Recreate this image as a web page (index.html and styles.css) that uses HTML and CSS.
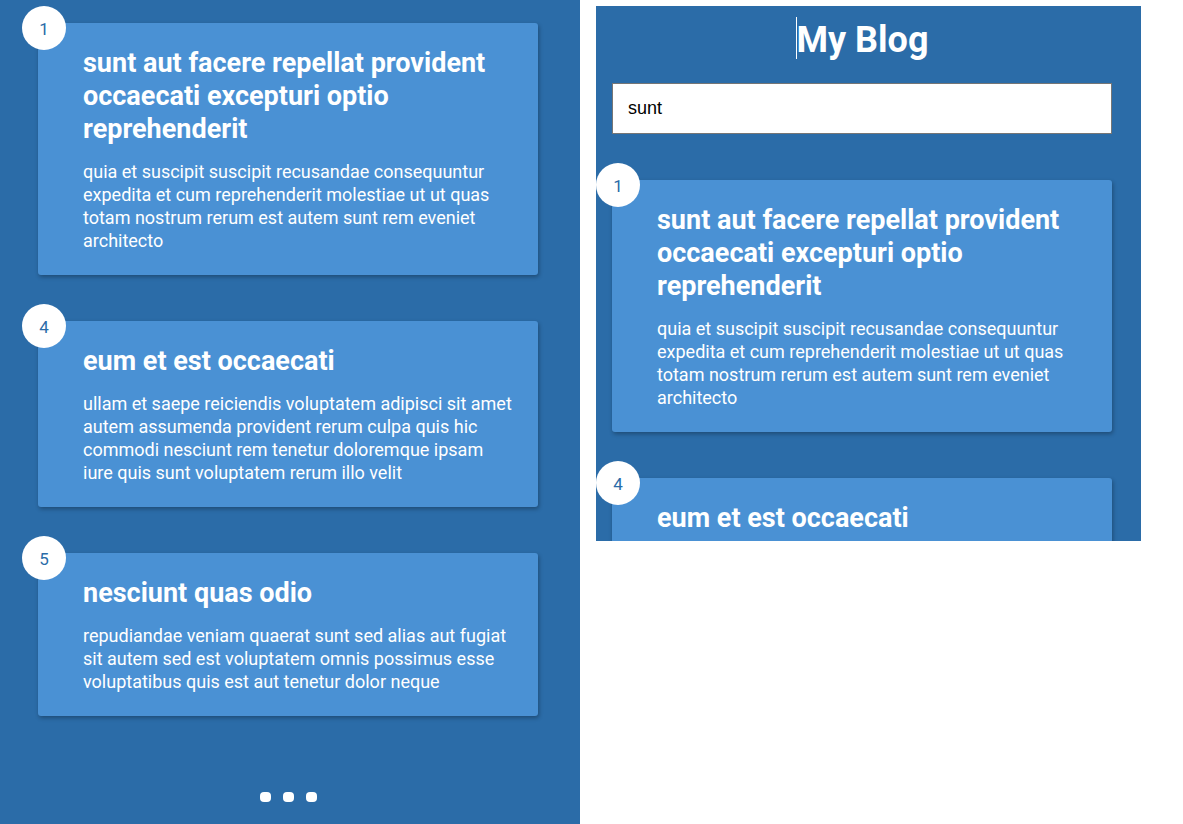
FILE: index.html
```html
<!DOCTYPE html>
<html>
<head>
<meta charset="utf-8">
<link rel="stylesheet" href="styles.css">
</head>
<body>
<div class="page">
  <div class="panel panel-left">
    <div class="list">
      <div class="card">
        <div class="num">1</div>
        <h2 class="title">sunt aut facere repellat provident occaecati excepturi optio reprehenderit</h2>
        <p class="body">quia et suscipit suscipit recusandae consequuntur expedita et cum reprehenderit molestiae ut ut quas totam nostrum rerum est autem sunt rem eveniet architecto</p>
      </div>
      <div class="card">
        <div class="num">4</div>
        <h2 class="title">eum et est occaecati</h2>
        <p class="body">ullam et saepe reiciendis voluptatem adipisci sit amet autem assumenda provident rerum culpa quis hic commodi nesciunt rem tenetur doloremque ipsam iure quis sunt voluptatem rerum illo velit</p>
      </div>
      <div class="card">
        <div class="num">5</div>
        <h2 class="title">nesciunt quas odio</h2>
        <p class="body">repudiandae veniam quaerat sunt sed alias aut fugiat sit autem sed est voluptatem omnis possimus esse voluptatibus quis est aut tenetur dolor neque</p>
      </div>
    </div>
    <div class="dots"><span class="dot"></span><span class="dot"></span><span class="dot"></span></div>
  </div>
  <div class="panel panel-right">
    <h1 class="blog-title"><span class="caret"></span>My Blog</h1>
    <input class="search" type="text" value="sunt">
    <div class="list list-right">
      <div class="card">
        <div class="num">1</div>
        <h2 class="title">sunt aut facere repellat provident occaecati excepturi optio reprehenderit</h2>
        <p class="body">quia et suscipit suscipit recusandae consequuntur expedita et cum reprehenderit molestiae ut ut quas totam nostrum rerum est autem sunt rem eveniet architecto</p>
      </div>
      <div class="card">
        <div class="num">4</div>
        <h2 class="title">eum et est occaecati</h2>
        <p class="body">ullam et saepe reiciendis voluptatem adipisci sit amet autem assumenda provident rerum culpa quis hic commodi nesciunt rem tenetur doloremque ipsam iure quis sunt voluptatem rerum illo velit</p>
      </div>
    </div>
  </div>
</div>
</body>
</html>
```
FILE: styles.css
```css
html, body {
  margin: 0;
  padding: 0;
  background: #ffffff;
}
body {
  font-family: Roboto, "Noto Sans", sans-serif;
  color: #ffffff;
}
.page {
  display: flex;
  align-items: flex-start;
}
.panel {
  background: #2b6ca8;
  overflow: hidden;
  box-sizing: border-box;
}
.panel-left {
  width: 580px;
  height: 824px;
  padding: 23px 0 22px 38px;
  display: flex;
  flex-direction: column;
}
.panel-right {
  width: 545px;
  height: 535px;
  margin: 6px 0 0 16px;
  padding: 0 29px 0 16px;
}
.list {
  display: flex;
  flex-direction: column;
  gap: 46px;
  width: 500px;
}
.list-right {
  margin-top: 46px;
}
.card {
  position: relative;
  background: #4a91d4;
  border-radius: 3px;
  box-shadow: 1px 2px 4px rgba(0, 0, 0, 0.3);
  padding: 24px 25px 23px 45px;
}
.num {
  position: absolute;
  left: -16px;
  top: -17px;
  width: 44px;
  height: 44px;
  border-radius: 50%;
  background: #ffffff;
  color: #2b6ca8;
  font-size: 17px;
  line-height: 46px;
  text-align: center;
}
.title {
  margin: 0;
  font-size: 27px;
  line-height: 33px;
  font-weight: 700;
}
.body {
  margin: 14px 0 0 0;
  font-size: 18px;
  line-height: 23px;
}
.dots {
  width: 500px;
  display: flex;
  justify-content: center;
  gap: 12px;
  margin-top: auto;
}
.dot {
  width: 11px;
  height: 10px;
  border-radius: 4px;
  background: #ffffff;
}
.blog-title {
  margin: 0;
  padding-top: 13px;
  height: 66px;
  box-sizing: border-box;
  text-align: center;
  font-size: 36px;
  line-height: 42px;
  font-weight: 700;
}
.caret {
  display: inline-block;
  width: 1px;
  height: 42px;
  background: #ffffff;
  vertical-align: top;
  margin-top: -2px;
}
.search {
  display: block;
  width: 500px;
  height: 51px;
  margin: 11px 0 0 0;
  box-sizing: border-box;
  border: 1px solid #767676;
  padding: 0 15px;
  font-family: "Liberation Sans", Arial, sans-serif;
  font-size: 18px;
  color: #000000;
  background: #ffffff;
  outline: none;
}
```
